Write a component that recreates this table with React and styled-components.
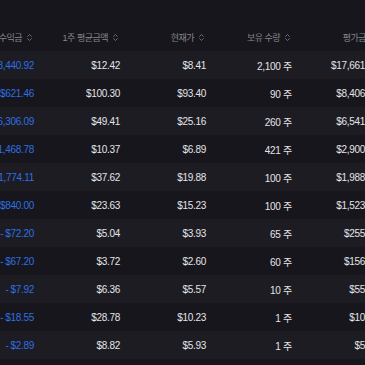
import styled, { createGlobalStyle } from "styled-components";
import { ChevronsUpDown } from "lucide-react";

const GlobalStyle = createGlobalStyle`
  html, body {
    margin: 0;
    padding: 0;
    background: #17161c;
  }
`;

const Page = styled.div`
  width: 365px;
  height: 365px;
  overflow: hidden;
  background: #17161c;
  padding-top: 23px;
  box-sizing: border-box;
  font-family: "Liberation Sans", "Noto Sans CJK KR", sans-serif;
`;

const Table = styled.div`
  margin-left: -40px;
  width: 430px;
`;

const Row = styled.div`
  display: grid;
  grid-template-columns: repeat(5, 86px);
  height: 28px;
  align-items: center;
  background: ${(p) => (p.$shade ? "#1d1c23" : "#17161c")};
`;

const HeadCell = styled.div`
  display: flex;
  justify-content: flex-end;
  align-items: center;
  gap: 3px;
  padding-right: 12px;
  font-size: 9px;
  letter-spacing: -0.5px;
  color: #85858e;
  white-space: nowrap;
`;

const Cell = styled.div`
  text-align: right;
  padding-right: 12px;
  font-size: 10px;
  letter-spacing: -0.3px;
  color: ${(p) => (p.$loss ? "#2f6fe2" : "#e4e4e9")};
  white-space: nowrap;
`;

const Minus = styled.span`
  margin-right: 2px;
`;

const SortIcon = styled(ChevronsUpDown)`
  flex-shrink: 0;
  color: #85858e;
`;

const headers = ["수익금", "1주 평균금액", "현재가", "보유 수량", "평가금"];

const rows = [
  ["$8,440.92", "$12.42", "$8.41", "2,100", "$17,661.00"],
  ["$621.46", "$100.30", "$93.40", "90", "$8,406.00"],
  ["$6,306.09", "$49.41", "$25.16", "260", "$6,541.60"],
  ["$1,468.78", "$10.37", "$6.89", "421", "$2,900.69"],
  ["$1,774.11", "$37.62", "$19.88", "100", "$1,988.00"],
  ["$840.00", "$23.63", "$15.23", "100", "$1,523.00"],
  ["$72.20", "$5.04", "$3.93", "65", "$255.45"],
  ["$67.20", "$3.72", "$2.60", "60", "$156.00"],
  ["$7.92", "$6.36", "$5.57", "10", "$55.70"],
  ["$18.55", "$28.78", "$10.23", "1", "$10.23"],
  ["$2.89", "$8.82", "$5.93", "1", "$5.93"],
];

export default function App() {
  return (
    <>
      <GlobalStyle />
      <Page>
        <Table>
          <Row>
            {headers.map((h) => (
              <HeadCell key={h}>
                {h}
                <SortIcon size={9} strokeWidth={2} />
              </HeadCell>
            ))}
          </Row>
          {rows.map((r, i) => (
            <Row key={i} $shade={i % 2 === 0}>
              <Cell $loss>
                <Minus>-</Minus>
                {r[0]}
              </Cell>
              <Cell>{r[1]}</Cell>
              <Cell>{r[2]}</Cell>
              <Cell>{r[3]} 주</Cell>
              <Cell>{r[4]}</Cell>
            </Row>
          ))}
        </Table>
      </Page>
    </>
  );
}
